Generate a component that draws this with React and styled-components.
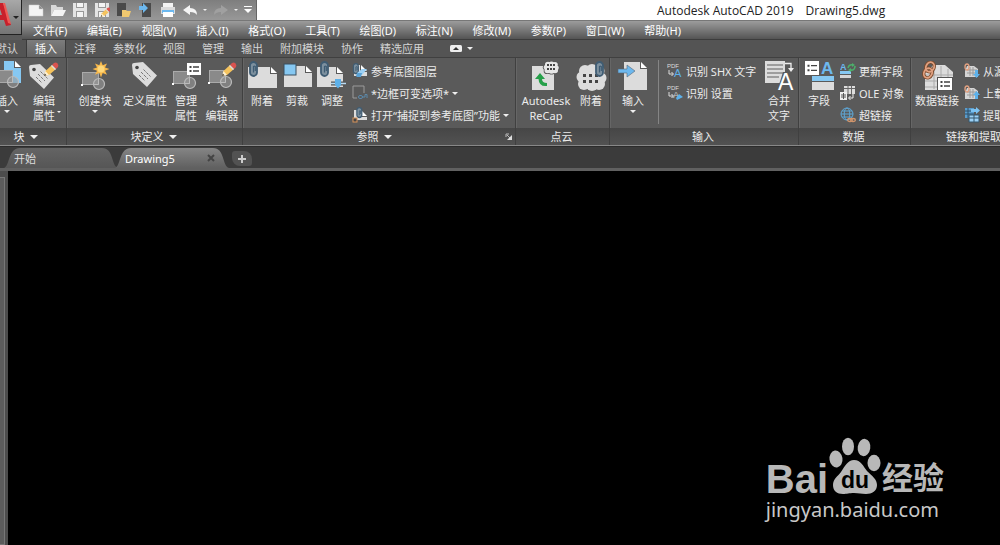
import styled, { createGlobalStyle } from 'styled-components';

const menus = [
  '文件(F)', '编辑(E)', '视图(V)', '插入(I)', '格式(O)', '工具(T)',
  '绘图(D)', '标注(N)', '修改(M)', '参数(P)', '窗口(W)', '帮助(H)',
];

const tabs = ['默认', '插入', '注释', '参数化', '视图', '管理', '输出', '附加模块', '协作', '精选应用'];

/* shared icon pieces */

const Page = ({ x, y, w, h, fill = '#dcdcdc' }) => (
  <>
    <path d={`M${x} ${y}h${w - 7}v7h7v${h - 7}h${-w}z`} fill={fill} />
    <path d={`M${x + w - 6} ${y}l6 6h-6z`} fill="#fff" />
  </>
);

const Clip = ({ x, y }) => (
  <g transform={`translate(${x} ${y})`}>
    <rect x="1" y="1" width="7" height="14" rx="3.5" fill="#7d909e" stroke="#3f5c73" strokeWidth="1.8" />
    <path d="M4.5 11.5V5.500a1.300 1.300 0 0 1 1.800 0V10" fill="none" stroke="#3f5c73" strokeWidth="1.2" />
  </g>
);

const Block = ({ x = 3, y = 11 }) => (
  <g transform={`translate(${x} ${y})`}>
    <rect x=".5" y=".5" width="16" height="12" fill="#8a8a8a" stroke="#aaa" />
    <circle cx="17" cy="12" r="5.5" fill="#999" fillOpacity=".6" stroke="#bbb" strokeWidth="1.2" />
    <path d="M11.500 12.500H16.500V6.500" fill="none" stroke="#bbb" />
    <rect x="-1" y="12" width="2" height="2" fill="#fff" />
  </g>
);

const Pencil = ({ x, y }) => (
  <g transform={`translate(${x} ${y})`}>
    <path d="M1 14l1.500-5L9 3l4 4-7 6z" fill="#f5c35d" />
    <path d="M1 14l1.500-5 3.500 4z" fill="#fff0d0" />
    <path d="M1 14l.8-2.500 1.600 1.700z" fill="#333" />
    <path d="M9 3l2-2q2-1 3.500.5T15 5l-2 2z" fill="#d9534f" />
    <path d="M8 4l1-1 4 4-1 1z" fill="#ddd" />
  </g>
);

const Tag = () => (
  <>
    <path d="M3 4q0-2 2-2l9-1 14 13.500L18 26 4 13z" fill="#dcdcdc" />
    <circle cx="8" cy="6.500" r="1.800" fill="#444" />
    <path d="M14.500 8.500l7 7M12 11l7 7M10 14l6 6" stroke="#777" strokeWidth="1" strokeDasharray="3 1" />
  </>
);

const List = ({ x, y, w = 14, h = 12 }) => (
  <g transform={`translate(${x} ${y})`}>
    <rect width={w} height={h} fill="#fff" />
    <path d={`M6 ${h / 3}h${w - 8}M6 ${(h * 2) / 3}h${w - 8}`} stroke="#444" strokeWidth="1.300" />
    <path d={`M2.500 ${h / 3}h2M2.500 ${(h * 2) / 3}h2`} stroke="#444" strokeWidth="2" />
  </g>
);

const Letter = ({ x, y, size, fill = '#fff', weight = 400 }) => (
  <text x={x} y={y} fontSize={size} fontWeight={weight} fill={fill} fontFamily="Liberation Sans, sans-serif">A</text>
);

/* puffy outline built from overlapping circles */
const Cloud = ({ fill = '#dcdcdc' }) => (
  <g fill={fill}>
    <circle cx="10" cy="10" r="6" />
    <circle cx="17" cy="9" r="6" />
    <circle cx="24" cy="10" r="5.500" />
    <circle cx="7" cy="16" r="5.500" />
    <circle cx="26" cy="17" r="5.500" />
    <circle cx="9" cy="23" r="6" />
    <circle cx="17" cy="24" r="6" />
    <circle cx="24" cy="23" r="6" />
    <rect x="8" y="9" width="17" height="15" />
  </g>
);

const dots = (xs, ys, size) =>
  xs.map((x) => ys.map((y) => <rect key={`${x}-${y}`} x={x} y={y} width={size} height={size} fill="#444" />));

const bigIcons = {
  insert: (
    <>
      <Page x={13} y={0} w={17} h={22} fill="#86c8f2" />
      <Block x={5} y={9} />
    </>
  ),
  editAttr: (
    <>
      <g transform="translate(-2 2)"><Tag /></g>
      <Pencil x={15} y={1} />
    </>
  ),
  create: (
    <>
      <Block />
      <path d="M22 0l1.700 4.300L28 2.500 26 6.500l4.500 1.500-4.500 1.700 2 4-4.300-1.700L22 16.500l-1.700-4.500-4.300 1.700 2-4L13.500 8 18 6.500l-2-4 4.300 1.800z" fill="#f7b84b" />
      <circle cx="22" cy="8" r="3.500" fill="#ffd87a" />
    </>
  ),
  define: <Tag />,
  manage: (
    <>
      <Block y={10} />
      <List x={17} y={2} />
    </>
  ),
  blockEdit: (
    <>
      <Block y={9} />
      <Pencil x={15} y={1} />
    </>
  ),
  attach: (
    <>
      <Page x={2} y={6} w={29} h={21} />
      <Clip x={3} y={0} />
    </>
  ),
  crop: (
    <>
      <Page x={3} y={5} w={28} h={21} />
      <rect x="3" y="3" width="12" height="11" fill="#86c8f2" stroke="#3b4f5e" />
    </>
  ),
  adjust: (
    <>
      <Page x={1} y={6} w={26} h={20} />
      <Clip x={4} y={0} />
      <path d="M15 22.500h15" stroke="#555" strokeWidth="4" />
      <path d="M15 22.500h15" stroke="#b9dcf5" strokeWidth="1.500" />
      <path d="M19 18h6v6l-3 3.500-3-3.500z" fill="#5db1ea" />
    </>
  ),
  recap: (
    <>
      <rect x="2" y="5" width="22" height="24" fill="#dcdcdc" />
      <g transform="translate(12 -2) scale(.56 .52)"><Cloud fill="#555" /></g>
      <g transform="translate(13 -1) scale(.5 .46)"><Cloud fill="#e6e6e6" /></g>
      {dots([17, 20, 23], [3, 7], 2)}
      <path d="M10 12l5 6h-3q0 4 5 4v3q-8 1-8.500-7H5z" fill="#26a04a" />
    </>
  ),
  cloud: (
    <>
      <Cloud />
      {dots([8, 14, 20], [13, 19], 3)}
      <Clip x={20} y={0} />
    </>
  ),
  import: (
    <>
      <Page x={7} y={1} w={23} h={28} />
      <path d="M1 8h9V4l8 6-8 6v-4H1z" fill="#6db8ee" stroke="#567" strokeWidth=".6" />
    </>
  ),
  merge: (
    <>
      <rect x="2" y="0" width="20" height="22" fill="#dcdcdc" />
      <path d="M4 4h16M4 8h16M4 12h16M4 16h12" stroke="#888" strokeWidth="1.400" />
      <path d="M22 2.500h6V8" fill="none" stroke="#eee" strokeWidth="1.300" />
      <path d="M25 7h6l-3 4z" fill="#eee" />
      <path d="M14 30l6-19h6l5 19z" fill="#5a5a5a" />
      <Letter x={15} y={29} size={23} />
    </>
  ),
  field: (
    <>
      <List x={2} y={0} h={14} />
      <Letter x={18} y={13} size={17} fill="#6db8ee" weight={700} />
      <rect x="9" y="15" width="22" height="5" fill="#86c8f2" />
      <rect x="9" y="21" width="22" height="8" fill="#dcdcdc" />
    </>
  ),
  dataLink: (
    <>
      <path d="M4 8h5l3-4h12l8 7v18H4z" fill="#dcdcdc" />
      <path d="M4 14h28M4 20h28M4 26h28M13 8v20M20 5v24M27 8v20" stroke="#aaa" fill="none" />
      <g fill="none" stroke="#7a4a2c" strokeWidth="3.500">
        <ellipse cx="9" cy="6" rx="4" ry="5" transform="rotate(25 9 6)" />
        <ellipse cx="7" cy="12" rx="4" ry="5" transform="rotate(25 7 12)" />
      </g>
      <g fill="none" stroke="#e0a080" strokeWidth="1.800">
        <ellipse cx="9" cy="6" rx="4" ry="5" transform="rotate(25 9 6)" />
        <ellipse cx="7" cy="12" rx="4" ry="5" transform="rotate(25 7 12)" />
      </g>
      <path d="M16 16h16v14H16z" fill="#555" />
      <List x={17} y={17} />
    </>
  ),
};

const Pdf = ({ children }) => (
  <>
    <text x="0" y="5" fontSize="6" fill="#ddd" fontFamily="Liberation Sans, sans-serif">PDF</text>
    <path d="M2 7v4h4M4.500 9l2 2-2 2" fill="none" stroke="#ddd" />
    {children}
  </>
);

const Source = ({ arrow }) => (
  <>
    <path d="M3 3h7l4 3v8H1V8z" fill="#d5d5d5" />
    <path d="M3 7h10M3 10h10M6 4v9M9 4v9" stroke="#999" />
    <ellipse cx="3" cy="4" rx="2" ry="3" fill="none" stroke="#e0a080" strokeWidth="1.400" />
    <path d={arrow} fill="#5db1ea" />
  </>
);

const smallIcons = {
  layers: (
    <>
      <Page x={2} y={2} w={13} h={11} />
      <g transform="scale(.7)"><Clip x={1} y={0} /></g>
      <path d="M5 10l5-4h5l-5 6H5z" fill="#9bd0f5" />
      <path d="M4 13l1-3h5l-1 4H5z" fill="#5aa2d6" />
    </>
  ),
  frame: (
    <>
      <path d="M5 13H1V1h11v7" fill="none" stroke="#9a9a9a" />
      <rect x="6.500" y="10.500" width="4" height="3" rx="1.500" fill="none" stroke="#5b89ab" />
      <path d="M10 12h3V9.500h2V13" fill="none" stroke="#5b89ab" />
    </>
  ),
  snap: (
    <>
      <Page x={2} y={3} w={13} h={10} />
      <g transform="scale(.7)"><Clip x={6} y={0} /></g>
      <rect x="1" y="11" width="4" height="4" fill="#444" stroke="#d8935a" />
    </>
  ),
  pdfText: <Pdf><Letter x={7} y={14} size={11} fill="#5db1ea" /></Pdf>,
  pdfSet: (
    <Pdf>
      <Letter x={6} y={13} size={9} fill="#ccc" />
      <path d="M9 13l3-4 4 3-6 3z" fill="#5db1ea" />
    </Pdf>
  ),
  update: (
    <>
      <Letter x={0} y={7} size={9} fill="#6db8ee" weight={700} />
      <path d="M0 8h11v3H0z" fill="#86c8f2" />
      <path d="M0 12h11v3H0z" fill="#d5d5d5" />
      <path d="M8 5q1-4 5-3M15 3q0 5-5 4" fill="none" stroke="#4caf6a" strokeWidth="1.600" />
      <path d="M12 0l3 2-3 2zM11 5v4L8 7z" fill="#4caf6a" />
    </>
  ),
  ole: (
    <>
      <path d="M4 1h11v8H4z" fill="#ddd" />
      <path d="M4 3.500h11M8 1v8M11.500 1v8" stroke="#666" />
      <path d="M0 7h7v8H0z" fill="#eee" />
      <path d="M1 10h5M1 12h5M3.500 8v6" stroke="#555" />
      <path d="M13 9v4H9M10.500 11l-2 2 2 2" fill="none" stroke="#eee" />
    </>
  ),
  hyper: (
    <>
      <g fill="none" stroke="#5fa8d8">
        <circle cx="7" cy="7" r="6" />
        <ellipse cx="7" cy="7" rx="2.800" ry="6" />
        <path d="M1 7h12M2 4h10M2 10h10" />
      </g>
      <g fill="none" stroke="#d0956c" strokeWidth="1.300">
        <ellipse cx="10" cy="13" rx="2.300" ry="1.500" />
        <ellipse cx="13" cy="13" rx="2.300" ry="1.500" />
      </g>
    </>
  ),
  fromSource: <Source arrow="M11 7h3v4h2l-3.500 4L9 11h2z" />,
  upload: <Source arrow="M11 14h3v-4h2l-3.500-4L9 10h2z" />,
  extract: (
    <>
      <path d="M1 1h9v10H1z" fill="#5a9ccc" />
      <path d="M1 4h9M1 7h9M4 1v10" stroke="#2f4f66" />
      <path d="M7 2h5V0l4 3.500L12 7V5H7z" fill="#7cc2f2" />
      <path d="M5 8h10v7H5z" fill="#9bd0f5" stroke="#35566d" />
      <path d="M5 11h10M10 8v7" stroke="#35566d" />
    </>
  ),
};

const Floppy = () => (
  <>
    <path d="M1 1h14v14H1z" fill="#e4e4e4" />
    <path d="M4 1h8v5H4zM4 9h8v6H4z" fill="#999" />
    <path d="M5 1h6v4H5zM5 10h6v5H5z" fill="#f4f4f4" />
  </>
);

const quickIcons = {
  新建: <path d="M1 3h10l4 4v7H1zM11 3v4h4" fill="#f4f4f4" stroke="#ccc" strokeWidth=".5" />,
  打开: (
    <>
      <path d="M1 3h5l1 2h6v3H4l-3 6z" fill="#d8d8d8" />
      <path d="M4 8h12l-3 6H1z" fill="#f4f4f4" />
    </>
  ),
  保存: <Floppy />,
  另存为: (
    <>
      <Floppy />
      <g transform="translate(6 5) scale(.7)"><Pencil x={0} y={0} /></g>
    </>
  ),
  从移动设备打开: (
    <>
      <path d="M1 1h9v13H1z" fill="#4a4a4a" />
      <path d="M6 8h4l1 1h4l-2 6H6z" fill="#f0c870" />
    </>
  ),
  保存到移动设备: (
    <>
      <path d="M4 1h9v14H4z" fill="#4a4a4a" />
      <path d="M1 4h4V1l5 5-5 5V8H1z" fill="#6db8ee" />
    </>
  ),
  打印: (
    <>
      <path d="M3 1h10v5H3z" fill="#f4f4f4" />
      <path d="M1 5h14v7H1z" fill="#dcdcdc" />
      <path d="M2 8h12v3H2z" fill="#6db8ee" />
      <path d="M3 10h10v5H3z" fill="#fff" />
    </>
  ),
};

const panels = [
  {
    title: '块', width: 80, menu: true,
    items: [
      { icon: 'insert', lines: ['插入'], width: 36, drop: 'below' },
      { icon: 'editAttr', lines: ['编辑', '属性'], width: 38, drop: 'side' },
    ],
  },
  {
    title: '块定义', width: 176, menu: true,
    items: [
      { icon: 'create', lines: ['创建块'], width: 52, drop: 'below' },
      { icon: 'define', lines: ['定义属性'], width: 48 },
      { icon: 'manage', lines: ['管理', '属性'], width: 34 },
      { icon: 'blockEdit', lines: ['块', '编辑器'], width: 38 },
    ],
  },
  {
    title: '参照', width: 273, menu: true, launcher: true,
    items: [
      { icon: 'attach', lines: ['附着'], width: 34 },
      { icon: 'crop', lines: ['剪裁'], width: 36 },
      { icon: 'adjust', lines: ['调整'], width: 34 },
      {
        rows: [
          { icon: 'layers', label: '参考底图图层' },
          { icon: 'frame', label: '*边框可变选项*', drop: true },
          { icon: 'snap', label: '打开“捕捉到参考底图”功能', drop: true },
        ],
      },
    ],
  },
  {
    title: '点云', width: 94,
    items: [
      { icon: 'recap', lines: ['Autodesk', 'ReCap'], width: 56 },
      { icon: 'cloud', lines: ['附着'], width: 34 },
    ],
  },
  {
    title: '输入', width: 189,
    items: [
      { icon: 'import', lines: ['输入'], width: 42, drop: 'below' },
      {
        divided: true,
        rows: [
          { icon: 'pdfText', label: '识别 SHX 文字' },
          { icon: 'pdfSet', label: '识别 设置' },
        ],
      },
      { icon: 'merge', lines: ['合并', '文字'], width: 34 },
    ],
  },
  {
    title: '数据', width: 112,
    items: [
      { icon: 'field', lines: ['字段'], width: 36 },
      {
        rows: [
          { icon: 'update', label: '更新字段' },
          { icon: 'ole', label: 'OLE 对象' },
          { icon: 'hyper', label: '超链接' },
        ],
      },
    ],
  },
  {
    title: '链接和提取', width: 128,
    items: [
      { icon: 'dataLink', lines: ['数据链接'], width: 48 },
      {
        rows: [
          { icon: 'fromSource', label: '从源下载' },
          { icon: 'upload', label: '上载到源' },
          { icon: 'extract', label: '提取数据' },
        ],
      },
    ],
  },
];

const RibbonItem = ({ item }) => {
  if (item.rows) {
    return (
      <Rows $divided={item.divided}>
        {item.rows.map((row) => (
          <SmallButton key={row.label} type="button">
            <SmallIcon viewBox="0 0 16 16">{smallIcons[row.icon]}</SmallIcon>
            {row.label}
            {row.drop && <Caret $size={3} />}
          </SmallButton>
        ))}
      </Rows>
    );
  }
  return (
    <BigButton type="button" $width={item.width}>
      <BigIcon viewBox="0 0 32 32">{bigIcons[item.icon]}</BigIcon>
      <BigLabel>
        <span>{item.lines.map((line) => <Line key={line}>{line}</Line>)}</span>
        {item.drop === 'side' && <Caret $size={2} />}
      </BigLabel>
      {item.drop === 'below' && <Caret $size={3} />}
    </BigButton>
  );
};

export default function App() {
  return (
    <Window>
      <GlobalStyle />
      <Header>
        <AppButton type="button" aria-label="应用程序菜单">
          <svg width="13" height="32" viewBox="0 0 13 32">
            <path d="M0 2h3l8 22-5 1-2-6H0v-5h2L0 8z" fill="#c8202b" />
            <path d="M3 2h2l6 21-3-1z" fill="#ee5a55" />
          </svg>
          <Caret $size={3} $color="#222" />
        </AppButton>
        <TitleRow>
          <QuickAccess>
            {Object.keys(quickIcons).map((name) => (
              <IconButton key={name} type="button" aria-label={name}>
                <SmallIcon viewBox="0 0 16 16">{quickIcons[name]}</SmallIcon>
              </IconButton>
            ))}
            <IconButton type="button" aria-label="放弃">
              <SmallIcon viewBox="0 0 16 16">
                <path d="M1 8l7-5v3q7 0 7 7-2-3-7-3v3z" fill="#f4f4f4" />
              </SmallIcon>
              <Caret $size={2} />
            </IconButton>
            <IconButton type="button" aria-label="重做">
              <SmallIcon viewBox="0 0 16 16">
                <path d="M15 8L8 3v3q-7 0-7 7 2-3 7-3v3z" fill="#a0a0a0" />
              </SmallIcon>
              <Caret $size={2} />
            </IconButton>
            <IconButton type="button" aria-label="自定义快速访问工具栏">
              <svg width="8" height="8" viewBox="0 0 8 8">
                <path d="M0 0h8v1H0zM0 3h8L4 7z" fill="#fff" />
              </svg>
            </IconButton>
          </QuickAccess>
          <Title>
            <span>Autodesk AutoCAD 2019</span>
            <span>Drawing5.dwg</span>
          </Title>
        </TitleRow>
        <MenuBar>
          <MenuList>
            {menus.map((menu) => <MenuButton key={menu} type="button">{menu}</MenuButton>)}
          </MenuList>
        </MenuBar>
      </Header>
      <RibbonTabs>
        {tabs.map((tab) => (
          <RibbonTab key={tab} type="button" $active={tab === '插入'}>{tab}</RibbonTab>
        ))}
        <Minimize type="button" aria-label="最小化功能区">
          <svg width="12" height="8" viewBox="0 0 12 8">
            <rect width="12" height="7" rx="1.500" fill="#eee" />
            <path d="M6 2l3 3H3z" fill="#333" />
          </svg>
          <Caret $size={3} />
        </Minimize>
      </RibbonTabs>
      <Ribbon>
        {panels.map((panel) => (
          <Panel key={panel.title} $width={panel.width}>
            <PanelBody>
              {panel.items.map((item, i) => <RibbonItem key={i} item={item} />)}
            </PanelBody>
            <PanelTitle>
              <PanelName>
                {panel.title}
                {panel.menu && <Caret $size={4} />}
              </PanelName>
              {panel.launcher && (
                <svg width="8" height="8" viewBox="0 0 8 8">
                  <path d="M1 4V1h3M2 2l4 4" fill="none" stroke="#bbb" />
                  <path d="M7 2v5H2z" fill="#ddd" />
                </svg>
              )}
            </PanelTitle>
          </Panel>
        ))}
      </Ribbon>
      <FileTabs>
        <FileTab type="button">开始</FileTab>
        <FileTab type="button" $active>
          Drawing5
          <svg width="8" height="8" viewBox="0 0 8 8">
            <path d="M1 1l6 6M7 1L1 7" stroke="#444" strokeWidth="2" />
          </svg>
        </FileTab>
        <NewTab type="button" aria-label="新图形">
          <svg width="8" height="8" viewBox="0 0 8 8">
            <path d="M4 0v8M0 4h8" stroke="#ccc" strokeWidth="2" />
          </svg>
        </NewTab>
      </FileTabs>
      <Workspace>
        <Dock><DockHandle /></Dock>
        <Drawing>
          <Watermark>
            <Brand>
              <Latin>Bai</Latin>
              <svg width="54" height="58" viewBox="0 0 54 58">
                <g fill="#b8b8b8">
                  <ellipse cx="8" cy="22" rx="6.500" ry="8.500" transform="rotate(-8 8 22)" />
                  <ellipse cx="20" cy="9.500" rx="6" ry="8.700" />
                  <ellipse cx="36" cy="10.500" rx="6.300" ry="8.700" transform="rotate(8 36 10.500)" />
                  <ellipse cx="46" cy="26" rx="6.500" ry="8.300" />
                  <path d="M26 23c7 0 9 6 13 11 5 5 10 8 10 14 0 6-5 9-11 9-5 0-7-1-12-1s-7 1-11 1C9 57 5 54 5 48c0-6 5-9 8-13 4-6 7-12 13-12z" />
                </g>
                <text x="13" y="51" fontSize="23" fontWeight="700" fill="#000" fontFamily="Liberation Sans, sans-serif">du</text>
              </svg>
              <Chinese>经验</Chinese>
            </Brand>
            <Site>jingyan.baidu.com</Site>
          </Watermark>
        </Drawing>
      </Workspace>
    </Window>
  );
}

const GlobalStyle = createGlobalStyle`
  * {
    box-sizing: border-box;
  }
  body {
    margin: 0;
    background: #000;
    font: 11px/15px 'Noto Sans', 'Noto Sans CJK SC', sans-serif;
  }
  button {
    padding: 0;
    border: 0;
    background: none;
    color: #ececec;
    font: inherit;
    white-space: nowrap;
  }
  svg {
    display: block;
    flex: none;
  }
`;

const Window = styled.div`
  display: flex;
  flex-direction: column;
  min-height: 100vh;
  overflow: hidden;
  background: #555;
`;

const Caret = styled.i`
  flex: none;
  width: 0;
  height: 0;
  border: ${(p) => p.$size}px solid transparent;
  border-top: ${(p) => p.$size}px solid ${(p) => p.$color || '#f0f0f0'};
  border-bottom: 0;
`;

const Header = styled.header`
  display: grid;
  grid-template-columns: 22px 1fr;
  grid-template-rows: 20px 20px;
  background: #5a5a5a;
`;

const AppButton = styled.button`
  grid-row: 1 / 3;
  display: flex;
  align-items: center;
  height: 35px;
  border-right: 1px solid #222;
  border-bottom: 1px solid #222;
  background: linear-gradient(#a8a8a8, #747474);
`;

const TitleRow = styled.div`
  display: flex;
  background: #fff;
`;

const QuickAccess = styled.div`
  display: flex;
  align-items: center;
  gap: 6px;
  width: 235px;
  padding-left: 6px;
  border-right: 1px solid #666;
  background: linear-gradient(#7e7e7e, #989898);
`;

const IconButton = styled.button`
  display: flex;
  align-items: center;
  gap: 5px;
`;

const Title = styled.div`
  display: flex;
  align-items: center;
  gap: 12px;
  padding-left: 400px;
  color: #222;
  font-family: 'Open Sans', sans-serif;
  font-size: 12px;
  white-space: nowrap;
`;

const MenuBar = styled.nav`
  padding-left: 11px;
  border-top: 1px solid #777;
  border-bottom: 1px solid #3c3c3c;
  background: linear-gradient(#9c9c9c, #545454);
`;

const MenuList = styled.div`
  display: flex;
  align-items: center;
  justify-content: space-between;
  max-width: 648px;
  height: 100%;
`;

const MenuButton = styled.button`
  color: #fff;
`;

const RibbonTabs = styled.nav`
  display: flex;
  gap: 1px;
  height: 17px;
  margin-left: -12px;
  background: #545454;
`;

const RibbonTab = styled.button`
  padding: 0 8px;
  color: ${(p) => (p.$active ? '#fff' : '#d4d4d4')};
  background: ${(p) => (p.$active ? 'linear-gradient(#7c7c7c, #646464)' : 'none')};
  box-shadow: ${(p) => (p.$active ? '0 0 0 1px #3a3a3a' : 'none')};
`;

const Minimize = styled.button`
  display: flex;
  align-items: center;
  gap: 5px;
  margin-left: 17px;
`;

const Ribbon = styled.section`
  display: flex;
  height: 89px;
  margin-left: -13px;
  border-top: 1px solid #404040;
  border-bottom: 1px solid #888;
  background: #5a5a5a;
`;

const Panel = styled.section`
  display: flex;
  flex: none;
  flex-direction: column;
  width: ${(p) => p.$width}px;
  border-right: 1px solid #404040;
  box-shadow: inset 1px 0 #666;
`;

const PanelBody = styled.div`
  display: flex;
  flex: 1;
  padding: 2px 2px 0;
`;

const PanelTitle = styled.footer`
  display: flex;
  align-items: center;
  height: 17px;
  padding-right: 2px;
  background: linear-gradient(#464646, #525252);
`;

const PanelName = styled.span`
  display: flex;
  flex: 1;
  align-items: center;
  justify-content: center;
  gap: 5px;
  color: #ececec;
`;

const BigButton = styled.button`
  display: flex;
  flex: none;
  flex-direction: column;
  align-items: center;
  width: ${(p) => p.$width}px;
  padding-top: 1px;
`;

const BigIcon = styled.svg`
  width: 32px;
  height: 32px;
`;

const BigLabel = styled.span`
  display: grid;
  grid-template-columns: 1fr auto 1fr;
  align-items: end;
  padding-bottom: 2px;
  span {
    grid-column: 2;
  }
  i {
    margin: 0 0 10px 2px;
  }
`;

const Line = styled.span`
  display: block;
`;

const Rows = styled.div`
  display: flex;
  flex: 1;
  flex-direction: column;
  min-width: 0;
  padding-left: ${(p) => (p.$divided ? 8 : 3)}px;
  margin: ${(p) => (p.$divided ? '0 0 4px 4px' : 0)};
  border-left: ${(p) => (p.$divided ? '1px solid #858585' : 0)};
`;

const SmallButton = styled.button`
  display: flex;
  align-items: center;
  gap: 3px;
  height: 22px;
`;

const SmallIcon = styled.svg`
  width: 16px;
  height: 16px;
`;

const FileTabs = styled.nav`
  display: flex;
  align-items: flex-end;
  height: 25px;
  padding-left: 4px;
  border-top: 1px solid #2c2c2c;
  border-bottom: 3px solid #606060;
  background: #3b3b3b;
`;

const FileTab = styled.button`
  display: flex;
  align-items: center;
  justify-content: space-between;
  width: 114px;
  height: 20px;
  padding: 0 14px 0 10px;
  margin-right: -3px;
  clip-path: path('M0 20C6 18 4 0 16 0H98C110 0 107 18 114 20z');
  background: ${(p) => (p.$active ? 'linear-gradient(#858585, #606060)' : 'linear-gradient(#646464, #565656)')};
  color: ${(p) => (p.$active ? '#fff' : '#ddd')};
`;

const NewTab = styled.button`
  display: flex;
  align-items: center;
  justify-content: center;
  width: 20px;
  height: 15px;
  margin: 0 0 2px 6px;
  border-radius: 3px 8px 3px 8px;
  background: #525252;
`;

const Workspace = styled.div`
  display: flex;
  flex: 1;
`;

const Dock = styled.aside`
  width: 8px;
  padding-top: 6px;
  background: #4c4c4c;
`;

const DockHandle = styled.div`
  width: 5px;
  height: 100%;
  border: 1px solid #777;
  border-left: 0;
  background: #5c5c5c;
`;

const Drawing = styled.main`
  display: flex;
  flex: 1;
  align-items: flex-end;
  justify-content: flex-end;
  padding: 0 56px 20px 0;
  background: #000;
`;

const Watermark = styled.div`
  display: flex;
  flex-direction: column;
`;

const Brand = styled.div`
  display: flex;
  align-items: flex-end;
  color: #b8b8b8;
  font-weight: 700;
`;

const Latin = styled.span`
  font: 700 40px/32px 'Liberation Sans', sans-serif;
`;

const Chinese = styled.span`
  font-size: 31px;
  line-height: 36px;
`;

const Site = styled.span`
  color: #c8c8c8;
  font-size: 20px;
  line-height: 30px;
`;
